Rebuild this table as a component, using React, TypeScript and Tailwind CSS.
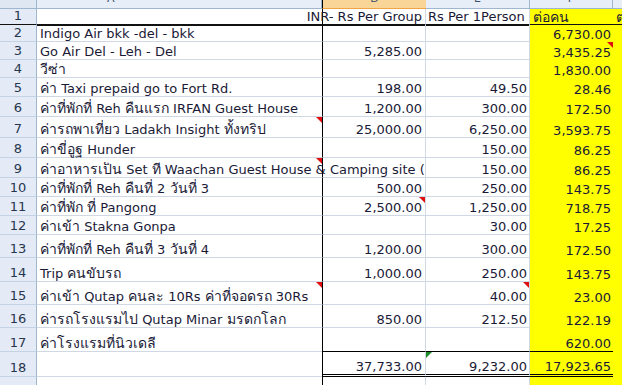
type Row = {
  h: number;
  a?: string;
  d?: string;
  e?: string;
  f?: string;
  g?: string;
  triA?: boolean;
  triD?: boolean;
  triE?: boolean;
  triF?: boolean;
  spanA?: boolean;
};

const rows: Row[] = [
  { h: 16, d: "INR- Rs Per Group", e: "Rs Per 1Person", f: "ต่อคน", g: "ต่อคน" },
  { h: 17, a: "Indigo Air bkk -del - bkk", f: "6,730.00" },
  { h: 18, a: "Go Air Del - Leh - Del", d: "5,285.00", f: "3,435.25", triF: true },
  { h: 18, a: "วีซ่า", f: "1,830.00" },
  { h: 19, a: "ค่า Taxi prepaid go to Fort Rd.", d: "198.00", e: "49.50", f: "28.46" },
  { h: 20, a: "ค่าที่พักที่ Reh คืนแรก IRFAN Guest House", d: "1,200.00", e: "300.00", f: "172.50" },
  { h: 21, a: "ค่ารถพาเที่ยว Ladakh Insight  ทั้งทริป", d: "25,000.00", e: "6,250.00", f: "3,593.75", triA: true },
  { h: 20, a: "ค่าขี่อูฐ  Hunder", e: "150.00", f: "86.25" },
  { h: 20, a: "ค่าอาหารเป็น Set ที่ Waachan Guest House & Camping site (", e: "150.00", f: "86.25", triA: true, spanA: true },
  { h: 19, a: "ค่าที่พักที่ Reh คืนที่ 2 วันที่ 3", d: "500.00", e: "250.00", f: "143.75" },
  { h: 19, a: "ค่าที่พัก ที่ Pangong", d: "2,500.00", e: "1,250.00", f: "718.75", triD: true },
  { h: 19, a: "ค่าเข้า Stakna Gonpa", e: "30.00", f: "17.25" },
  { h: 23, a: "ค่าที่พักที่ Reh คืนที่ 3 วันที่ 4", d: "1,200.00", e: "300.00", f: "172.50" },
  { h: 24, a: "Trip คนขับรถ", d: "1,000.00", e: "250.00", f: "143.75" },
  { h: 23, a: "ค่าเข้า Qutap คนละ 10Rs ค่าที่จอดรถ 30Rs", e: "40.00", f: "23.00", triA: true, triE: true },
  { h: 23, a: "ค่ารถโรงแรมไป Qutap Minar มรดกโลก", d: "850.00", e: "212.50", f: "122.19" },
  { h: 24, a: "ค่าโรงแรมที่นิวเดลี", f: "620.00" },
  { h: 25, d: "37,733.00", e: "9,232.00", f: "17,923.65" },
];

// Thai runs are set a touch larger, like Tahoma's Thai glyphs in the original
function Txt({ s }: { s?: string }) {
  if (!s) return null;
  const parts = s.split(/([\u0E00-\u0E7F]+)/);
  return (
    <>
      {parts.map((p, i) =>
        /[\u0E00-\u0E7F]/.test(p) ? (
          <span key={i} className="text-[14px]">
            {p}
          </span>
        ) : (
          <span key={i}>{p}</span>
        )
      )}
    </>
  );
}

function RedTri() {
  return (
    <span className="absolute top-0 right-0 w-0 h-0 border-t-[6px] border-l-[6px] border-t-[#e01010] border-l-transparent" />
  );
}

const cols = "grid grid-cols-[37px_285px_104px_104px_83px_1fr]";

export default function App() {
  return (
    <div className="w-[622px] h-[385px] overflow-hidden bg-white font-['DejaVu_Sans',Tahoma,sans-serif] text-[13px] leading-[14px] text-[#1a1a36]">
      {/* column headers */}
      <div className={`${cols} h-[9px] text-[11px] text-[#3d5170] leading-[13px]`}>
        <div className="bg-[#dfe7f2] border-r border-b border-[#9eb6ce]" />
        <div className="bg-[#e8eef7] border-r border-b border-[#9eb6ce] overflow-hidden">
          <div className="-mt-[8px] pl-[70px]">A</div>
        </div>
        <div className="relative bg-[#f9d597] border-l border-l-black border-b border-b-[#f2a444] overflow-hidden flex justify-center">
          <div className="-mt-[8px]">D</div>
        </div>
        <div className="bg-[#e8eef7] border-r border-b border-[#9eb6ce] overflow-hidden flex justify-center">
          <div className="-mt-[8px]">E</div>
        </div>
        <div className="bg-[#e8eef7] border-r border-b border-[#9eb6ce] overflow-hidden flex justify-center">
          <div className="-mt-[8px]">F</div>
        </div>
        <div className="bg-[#e8eef7] border-b border-[#9eb6ce]" />
      </div>

      {rows.map((r, i) => {
        const first = i === 0;
        const sub = i === 16;
        const total = i === 17;
        const line = first
          ? "border-b-2 border-b-[#111]"
          : "border-b border-b-[#d0d7e5]";
        const numLine = sub
          ? "border-b border-b-black"
          : total
            ? "border-b-[3px] border-double border-b-black"
            : line;
        return (
          <div key={i} className={cols} style={{ height: r.h }}>
            <div
              className={`bg-[#e4ebf6] border-r border-r-[#9eb6ce] flex items-end justify-center pb-[1px] text-[#27364f] ${
                first ? "border-b-2 border-b-[#111]" : "border-b border-b-[#c4d2e4]"
              }`}
            >
              {i + 1}
            </div>
            <div className={`relative flex items-end whitespace-nowrap pl-[3px] ${line}`}>
              {r.spanA ? (
                <div className="w-[386px] shrink-0 overflow-hidden">
                  <Txt s={r.a} />
                </div>
              ) : (
                <div className="shrink-0">
                  <Txt s={r.a} />
                </div>
              )}
              {r.triA && <RedTri />}
            </div>
            <div
              className={`relative border-l border-l-black border-r border-r-[#d0d7e5] flex items-end justify-end whitespace-nowrap pr-[3px] ${numLine}`}
            >
              <div className="shrink-0">{r.d}</div>
              {r.triD && <RedTri />}
            </div>
            <div
              className={`relative border-r border-r-[#d0d7e5] flex items-end whitespace-nowrap ${
                first ? "pl-[2px]" : "justify-end pr-[2px]"
              } ${numLine}`}
            >
              {total && (
                <span className="absolute top-0 left-0 w-0 h-0 border-t-[6px] border-r-[6px] border-t-[#1e8a2a] border-r-transparent" />
              )}
              {r.e}
              {r.triE && <RedTri />}
            </div>
            <div
              className={`relative bg-[#ffff00] flex items-end whitespace-nowrap ${
                first ? "pl-[3px]" : "justify-end pr-[2px]"
              } ${sub || total ? numLine : first ? "border-b-2 border-b-[#111]" : ""}`}
            >
              <Txt s={r.f} />
              {r.triF && <RedTri />}
            </div>
            <div
              className={`bg-[#ffff00] flex items-end whitespace-nowrap overflow-hidden pl-[3px] ${
                first ? "border-b-2 border-b-[#111]" : ""
              }`}
            >
              <Txt s={r.g} />
            </div>
          </div>
        );
      })}

      {/* partial row 19 */}
      <div className={`${cols} h-[10px]`}>
        <div className="bg-[#e4ebf6] border-r border-r-[#9eb6ce]" />
        <div />
        <div className="border-l border-l-black border-r border-r-[#d0d7e5]" />
        <div className="border-r border-r-[#d0d7e5]" />
        <div className="bg-[#ffff00]" />
        <div className="bg-[#ffff00]" />
      </div>
    </div>
  );
}
